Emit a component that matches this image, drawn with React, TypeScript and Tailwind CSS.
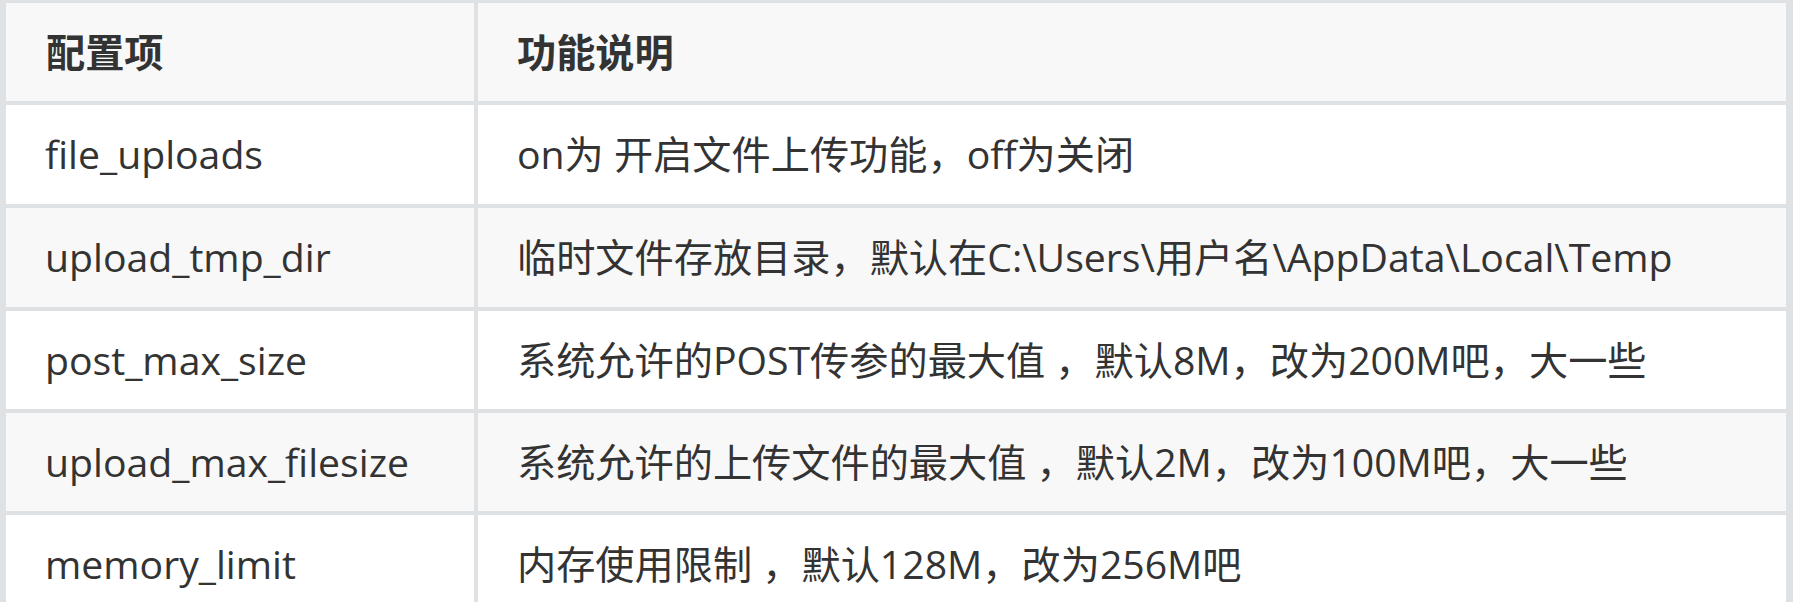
import React from 'react';

const rows: { key: string; desc: string; bg: string; h: string }[] = [
  { key: 'file_uploads', desc: 'on为 开启文件上传功能，off为关闭', bg: 'bg-white', h: 'h-[99px]' },
  { key: 'upload_tmp_dir', desc: '临时文件存放目录，默认在C:\\Users\\用户名\\AppData\\Local\\Temp', bg: 'bg-[#f8f8f8]', h: 'h-[99px]' },
  { key: 'post_max_size', desc: '系统允许的POST传参的最大值 ，默认8M，改为200M吧，大一些', bg: 'bg-white', h: 'h-[98px]' },
  { key: 'upload_max_filesize', desc: '系统允许的上传文件的最大值 ，默认2M，改为100M吧，大一些', bg: 'bg-[#f8f8f8]', h: 'h-[98px]' },
  { key: 'memory_limit', desc: '内存使用限制 ，默认128M，改为256M吧', bg: 'bg-white', h: 'h-[98px]' },
];

const App: React.FC = () => {
  return (
    <div
      className="h-[602px] w-[1793px] overflow-hidden bg-white text-[39.2px] text-[#333333]"
      style={{ fontFamily: '"Open Sans", "Noto Sans CJK SC", sans-serif' }}
    >
      {/* Table */}
      <div className="grid grid-cols-[468px_1fr] gap-[4px] bg-[#dfe2e5] pt-[3px] pl-[6px] pr-[7px] pb-[4px]">
        {/* Header */}
        <div className="flex h-[98px] items-center bg-[#f8f8f8] pl-[40px] font-bold">配置项</div>
        <div className="flex h-[98px] items-center bg-[#f8f8f8] pl-[39px] font-bold">功能说明</div>

        {rows.map((r) => (
          <React.Fragment key={r.key}>
            <div className={`flex items-center pl-[39px] ${r.bg} ${r.h}`}>{r.key}</div>
            <div className={`flex items-center pl-[39px] whitespace-nowrap ${r.bg} ${r.h}`}>{r.desc}</div>
          </React.Fragment>
        ))}
      </div>
    </div>
  );
};

export default App;
